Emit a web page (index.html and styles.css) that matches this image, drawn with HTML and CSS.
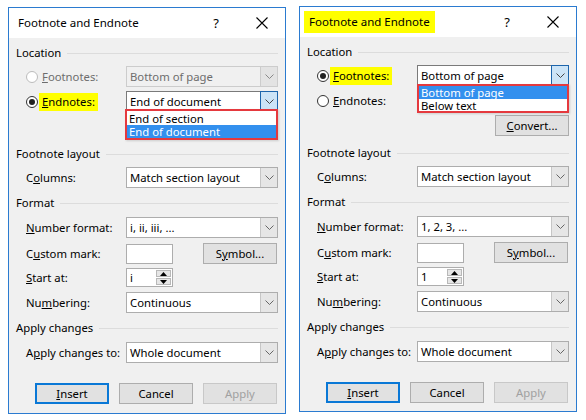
FILE: index.html
```html
<!DOCTYPE html>
<html>
<head>
<meta charset="utf-8">
<link rel="stylesheet" href="styles.css">
</head>
<body>
<div class="page">
  <div class="dialog dialog-left">
    <div class="titlebar">
      <span class="title">Footnote and Endnote</span>
      <span class="tb-btn help">?</span>
      <span class="tb-btn close"><svg width="12" height="12" viewBox="0 0 12 12"><path d="M0.5 0.5L11.5 11.5M11.5 0.5L0.5 11.5" stroke="#000" stroke-width="1.1" fill="none"/></svg></span>
    </div>
    <div class="body">
      <div class="group g-location"><span>Location</span><i></i></div>
      <div class="row r-first">
        <div class="radio disabled"><span class="rb"></span><span class="lbl"><u>F</u>ootnotes:</span></div>
        <div class="combo disabled"><span class="val">Bottom of page</span><span class="arrow"><svg width="9" height="5" viewBox="0 0 9 5"><path d="M0.5 0.5L4.5 4.5L8.5 0.5" stroke="#888" fill="none"/></svg></span></div>
      </div>
      <div class="row r-second">
        <div class="radio checked"><span class="rb"></span><span class="lbl hl"><u>E</u>ndnotes:</span></div>
        <div class="combo focused"><span class="val">End of document</span><span class="arrow"><svg width="9" height="5" viewBox="0 0 9 5"><path d="M0.5 0.5L4.5 4.5L8.5 0.5" stroke="#444" fill="none"/></svg></span>
          <div class="droplist">
            <div class="item">End of section</div>
            <div class="item sel">End of document</div>
          </div>
        </div>
      </div>
      <div class="row r-convert"><button class="btn covered"><u>C</u>onvert...</button></div>
      <div class="group g-layout"><span>Footnote layout</span><i></i></div>
      <div class="row r-columns">
        <span class="label">C<u>o</u>lumns:</span>
        <div class="combo"><span class="val">Match section layout</span><span class="arrow"><svg width="9" height="5" viewBox="0 0 9 5"><path d="M0.5 0.5L4.5 4.5L8.5 0.5" stroke="#666" fill="none"/></svg></span></div>
      </div>
      <div class="group g-format"><span>Format</span><i></i></div>
      <div class="row r-numfmt">
        <span class="label"><u>N</u>umber format:</span>
        <div class="combo"><span class="val">i, ii, iii, ...</span><span class="arrow"><svg width="9" height="5" viewBox="0 0 9 5"><path d="M0.5 0.5L4.5 4.5L8.5 0.5" stroke="#666" fill="none"/></svg></span></div>
      </div>
      <div class="row r-custom">
        <span class="label">C<u>u</u>stom mark:</span>
        <div class="textbox"></div>
        <button class="btn sym">S<u>y</u>mbol...</button>
      </div>
      <div class="row r-start">
        <span class="label"><u>S</u>tart at:</span>
        <div class="spin"><span class="val">i</span><span class="spin-btns"><span class="sb"><svg width="7" height="4" viewBox="0 0 7 4"><path d="M0 4L3.5 0L7 4Z" fill="#000"/></svg></span><span class="sb"><svg width="7" height="4" viewBox="0 0 7 4"><path d="M0 0L3.5 4L7 0Z" fill="#000"/></svg></span></span></div>
      </div>
      <div class="row r-numbering">
        <span class="label">Nu<u>m</u>bering:</span>
        <div class="combo"><span class="val">Continuous</span><span class="arrow"><svg width="9" height="5" viewBox="0 0 9 5"><path d="M0.5 0.5L4.5 4.5L8.5 0.5" stroke="#666" fill="none"/></svg></span></div>
      </div>
      <div class="group g-apply"><span>Apply changes</span><i></i></div>
      <div class="row r-applyto">
        <span class="label">A<u>p</u>ply changes to:</span>
        <div class="combo"><span class="val">Whole document</span><span class="arrow"><svg width="9" height="5" viewBox="0 0 9 5"><path d="M0.5 0.5L4.5 4.5L8.5 0.5" stroke="#666" fill="none"/></svg></span></div>
      </div>
      <div class="row r-buttons">
        <button class="btn default"><u>I</u>nsert</button>
        <button class="btn">Cancel</button>
        <button class="btn dis">Apply</button>
      </div>
    </div>
  </div>

  <div class="dialog dialog-right">
    <div class="titlebar">
      <span class="title hl-title">Footnote and Endnote</span>
      <span class="tb-btn help">?</span>
      <span class="tb-btn close"><svg width="12" height="12" viewBox="0 0 12 12"><path d="M0.5 0.5L11.5 11.5M11.5 0.5L0.5 11.5" stroke="#000" stroke-width="1.1" fill="none"/></svg></span>
    </div>
    <div class="body">
      <div class="group g-location"><span>Location</span><i></i></div>
      <div class="row r-first">
        <div class="radio checked"><span class="rb"></span><span class="lbl hl"><u>F</u>ootnotes:</span></div>
        <div class="combo focused"><span class="val">Bottom of page</span><span class="arrow"><svg width="9" height="5" viewBox="0 0 9 5"><path d="M0.5 0.5L4.5 4.5L8.5 0.5" stroke="#444" fill="none"/></svg></span>
          <div class="droplist dl-right">
            <div class="item sel">Bottom of page</div>
            <div class="item">Below text</div>
          </div>
        </div>
      </div>
      <div class="row r-second">
        <div class="radio"><span class="rb"></span><span class="lbl"><u>E</u>ndnotes:</span></div>
      </div>
      <div class="row r-convert"><button class="btn"><u>C</u>onvert...</button></div>
      <div class="group g-layout"><span>Footnote layout</span><i></i></div>
      <div class="row r-columns">
        <span class="label">C<u>o</u>lumns:</span>
        <div class="combo"><span class="val">Match section layout</span><span class="arrow"><svg width="9" height="5" viewBox="0 0 9 5"><path d="M0.5 0.5L4.5 4.5L8.5 0.5" stroke="#666" fill="none"/></svg></span></div>
      </div>
      <div class="group g-format"><span>Format</span><i></i></div>
      <div class="row r-numfmt">
        <span class="label"><u>N</u>umber format:</span>
        <div class="combo"><span class="val">1, 2, 3, ...</span><span class="arrow"><svg width="9" height="5" viewBox="0 0 9 5"><path d="M0.5 0.5L4.5 4.5L8.5 0.5" stroke="#666" fill="none"/></svg></span></div>
      </div>
      <div class="row r-custom">
        <span class="label">C<u>u</u>stom mark:</span>
        <div class="textbox"></div>
        <button class="btn sym">S<u>y</u>mbol...</button>
      </div>
      <div class="row r-start">
        <span class="label"><u>S</u>tart at:</span>
        <div class="spin"><span class="val">1</span><span class="spin-btns"><span class="sb"><svg width="7" height="4" viewBox="0 0 7 4"><path d="M0 4L3.5 0L7 4Z" fill="#000"/></svg></span><span class="sb"><svg width="7" height="4" viewBox="0 0 7 4"><path d="M0 0L3.5 4L7 0Z" fill="#000"/></svg></span></span></div>
      </div>
      <div class="row r-numbering">
        <span class="label">Nu<u>m</u>bering:</span>
        <div class="combo"><span class="val">Continuous</span><span class="arrow"><svg width="9" height="5" viewBox="0 0 9 5"><path d="M0.5 0.5L4.5 4.5L8.5 0.5" stroke="#666" fill="none"/></svg></span></div>
      </div>
      <div class="group g-apply"><span>Apply changes</span><i></i></div>
      <div class="row r-applyto">
        <span class="label">A<u>p</u>ply changes to:</span>
        <div class="combo"><span class="val">Whole document</span><span class="arrow"><svg width="9" height="5" viewBox="0 0 9 5"><path d="M0.5 0.5L4.5 4.5L8.5 0.5" stroke="#666" fill="none"/></svg></span></div>
      </div>
      <div class="row r-buttons">
        <button class="btn default"><u>I</u>nsert</button>
        <button class="btn">Cancel</button>
        <button class="btn dis">Apply</button>
      </div>
    </div>
  </div>
</div>
</body>
</html>
```

FILE: styles.css
```css
* { box-sizing: border-box; }
html, body { margin: 0; padding: 0; background: #fff; }
body {
  font-family: "Segoe UI", "Noto Sans", "DejaVu Sans", sans-serif;
  font-size: 11.3px;
  color: #000;
}
u { text-decoration: underline; text-underline-offset: 1px; }

.page {
  display: flex;
  align-items: flex-start;
  gap: 13px;
  padding: 6px 0 0 8px;
}

.dialog {
  width: 278px;
  height: 407px;
  border: 1px solid #2b7bd0;
  background: #f0f0f0;
  display: flex;
  flex-direction: column;
}
.dialog-left { margin-top: 1px; }
.dialog-right { height: 406px; }

.titlebar {
  height: 30px;
  flex: none;
  background: #fff;
  display: flex;
  align-items: center;
  padding-left: 9px;
}
.title { font-size: 11.5px; line-height: 16px; }
.hl-title {
  background: #ffff00;
  margin-left: -5px;
  padding: 3px 5px;
}
.tb-btn {
  width: 46px;
  height: 30px;
  display: flex;
  align-items: center;
  justify-content: center;
}
.help { margin-left: auto; font-size: 13px; }
.close svg { display: block; }

.body {
  padding: 0 7px;
  display: flex;
  flex-direction: column;
}

.group {
  display: flex;
  align-items: center;
  height: 16px;
  line-height: 16px;
  margin-top: 7px;
}
.group i {
  flex: 1;
  height: 1px;
  background: #dcdcdc;
  margin-left: 6px;
}

.row {
  display: flex;
  align-items: center;
  height: 21px;
  padding-left: 10px;
  position: relative;
}
.r-first { margin-top: 5px; }
.r-second { margin-top: 4px; }
.r-convert { margin-top: 3px; height: 22px; justify-content: flex-end; }
.g-layout { margin-top: 9px; }
.r-columns { margin-top: 5px; }
.g-format { margin-top: 7px; }
.r-numfmt { margin-top: 6px; }
.r-custom { margin-top: 5px; }
.r-start { margin-top: 4px; height: 19px; }
.r-numbering { margin-top: 5px; }
.g-apply { margin-top: 7px; }
.r-applyto { margin-top: 6px; }
.r-buttons { margin-top: 20px; justify-content: flex-end; gap: 10px; padding-right: 1px; }

.label { width: 100px; flex: none; white-space: nowrap; }

.radio {
  width: 100px;
  flex: none;
  display: flex;
  align-items: center;
}
.rb {
  width: 12px;
  height: 12px;
  border: 1px solid #333;
  border-radius: 50%;
  background: #fff;
  margin-right: 1px;
  display: flex;
  align-items: center;
  justify-content: center;
  flex: none;
}
.radio.checked .rb::after {
  content: "";
  width: 6px;
  height: 6px;
  border-radius: 50%;
  background: #222;
}
.radio.disabled .rb { border-color: #bcbcbc; }
.radio.disabled .lbl { color: #6d6d6d; }
.lbl { padding: 3px 3px; line-height: 12px; }
.lbl.hl { background: #ffff00; }

.combo {
  width: 152px;
  height: 21px;
  flex: none;
  border: 1px solid #adadad;
  background: #fff;
  display: flex;
  align-items: stretch;
  position: relative;
}
.combo .val {
  flex: 1;
  padding-left: 3px;
  line-height: 19px;
  white-space: nowrap;
}
.combo .arrow {
  width: 17px;
  flex: none;
  background: #e6e6e6;
  border-left: 1px solid #c6c6c6;
  display: flex;
  align-items: center;
  justify-content: center;
}
.combo .arrow svg { display: block; }
.combo.disabled { background: #f0f0f0; border-color: #cccccc; color: #6d6d6d; }
.combo.disabled .arrow { background: #e3e3e3; border-left-color: #cccccc; }
.combo.focused { border-color: #7a7a7a; }
.combo.focused .arrow {
  background: #cce4f7;
  border: 1px solid #1d65ac;
  margin: -1px -1px -1px 0;
  width: 18px;
}

.droplist {
  position: absolute;
  left: -2px;
  right: -1px;
  top: calc(100% - 2px);
  height: 31px;
  border: 2px solid #e5393e;
  background: #fff;
  padding: 1px 0;
  z-index: 5;
  box-shadow: 1px 1px 2px rgba(0,0,0,0.15);
}
.dl-right { left: -1px; top: calc(100% - 1px); height: 29px; padding: 0; }
.droplist .item {
  height: 13px;
  line-height: 13px;
  padding-left: 2px;
  white-space: nowrap;
  overflow: hidden;
}
.droplist .item.sel { background: #3390ee; color: #fff; }

.textbox {
  width: 47px;
  height: 20px;
  border: 1px solid #adadad;
  background: #fff;
  flex: none;
}
.btn {
  width: 74px;
  height: 21px;
  flex: none;
  border: 1px solid #adadad;
  background: #e1e1e1;
  font: inherit;
  color: #000;
  padding: 0;
  line-height: 17px;
}
.btn.covered { visibility: hidden; }
.btn.sym { margin-left: auto; margin-right: 1px; }
.btn.default { border: 2px solid #0a78d6; }
.btn.dis { color: #a0a0a0; border-color: #c8c8c8; }

.spin {
  width: 47px;
  height: 19px;
  flex: none;
  border: 1px solid #adadad;
  background: #fff;
  display: flex;
}
.spin .val { flex: 1; padding-left: 3px; line-height: 17px; }
.spin-btns {
  width: 16px;
  display: flex;
  flex-direction: column;
  padding: 1px 1px 1px 0;
  gap: 1px;
}
.sb {
  flex: 1;
  background: #e6e6e6;
  border: 1px solid #b8b8b8;
  display: flex;
  align-items: center;
  justify-content: center;
}
.sb svg { display: block; }
```
